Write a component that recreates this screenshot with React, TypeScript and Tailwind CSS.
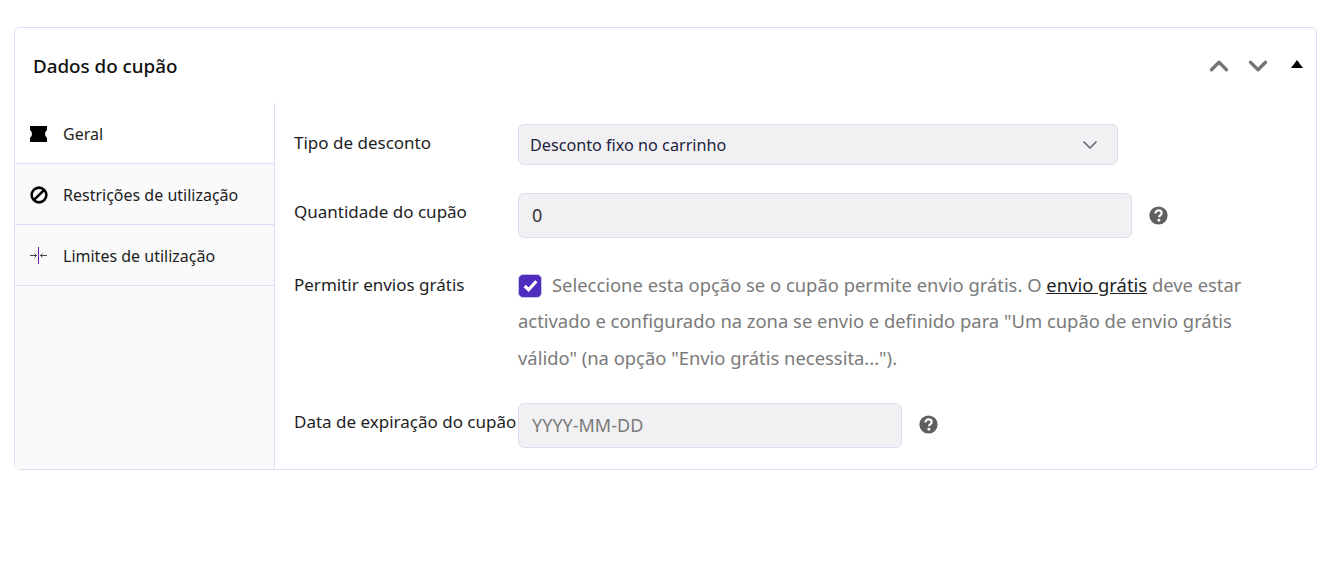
import { ChevronDown, ChevronUp } from 'lucide-react';

function HelpIcon() {
  return (
    <svg viewBox="0 0 20 20" className="w-[19px] h-[19px]">
      <circle cx="10" cy="10" r="9.6" fill="#5f5f5f" />
      <path d="M6.8 7.9c0-2 1.4-3.2 3.3-3.2 1.9 0 3.2 1.1 3.2 2.7 0 1.2-.6 1.8-1.5 2.4-.9.6-1.2 1-1.2 2" fill="none" stroke="#fff" strokeWidth="2.3" />
      <circle cx="10.4" cy="15" r="1.5" fill="#fff" />
    </svg>
  );
}

function Tab({ icon, label, active }: { icon: React.ReactNode; label: string; active?: boolean }) {
  return (
    <div className={`h-[61px] flex items-center border-b border-[#e0dcf6] pt-[1px] ${active ? 'bg-white' : 'bg-[#fafafa]'}`}>
      <div className="w-[48px] flex justify-center pr-[1px]">{icon}</div>
      <span className="text-[16px] text-[#1e1e1e]">{label}</span>
    </div>
  );
}

export default function App() {
  return (
    <div className="w-[1341px] h-[561px] bg-white pt-[27px] px-[14px] font-['Noto_Sans','Open_Sans',sans-serif]">
      <div className="w-[1303px] h-[443px] border border-[#e0dcf6] rounded-[6px] flex flex-col">
        <div className="h-[75px] flex items-center justify-between pl-[18px] pr-[4px] shrink-0">
          <span className="text-[18.8px] font-medium text-[#111] pt-[2px]">Dados do cupão</span>
          <div className="flex items-center gap-[9px]">
            <ChevronUp className="w-[30px] h-[30px] text-[#757575]" strokeWidth={2.6} />
            <ChevronDown className="w-[30px] h-[30px] text-[#757575]" strokeWidth={2.6} />
            <span className="w-[30px] flex justify-center pb-[4px]">
              <span className="w-0 h-0 border-x-[6px] border-x-transparent border-b-[8px] border-b-black" />
            </span>
          </div>
        </div>
        <div className="flex flex-1 min-h-0">
          <div className="w-[260px] shrink-0 border-r border-[#e0dcf6] bg-[#fafafa]">
            <Tab
              active
              label="Geral"
              icon={
                <svg viewBox="0 0 17 16" className="w-[17px] h-[16px]">
                  <path d="M0 0h17v4a5 5 0 0 0 0 8v4H0v-4a5 5 0 0 0 0-8z" fill="#000" />
                </svg>
              }
            />
            <Tab
              label="Restrições de utilização"
              icon={
                <svg viewBox="0 0 20 20" className="w-[18px] h-[18px]">
                  <circle cx="10" cy="10" r="8.2" fill="none" stroke="#000" strokeWidth="2.8" />
                  <path d="M4.5 15.5 15.5 4.5" stroke="#000" strokeWidth="2.8" />
                </svg>
              }
            />
            <Tab
              label="Limites de utilização"
              icon={
                <svg viewBox="0 0 17 17" className="w-[17px] h-[17px] mb-[1px]">
                  <path d="M8.5 0v17" stroke="#7b1fa2" strokeWidth="1" />
                  <path d="M0 8.5h6.5M4.5 6.5l2 2-2 2M17 8.5h-6.5M12.5 6.5l-2 2 2 2" stroke="#444" strokeWidth="1" fill="none" />
                </svg>
              }
            />
          </div>
          <div className="flex-1 pl-[18px] pt-[21px]">
            <div className="flex h-[41px]">
              <span className="w-[225px] shrink-0 text-[17px] text-[#1e1e1e] leading-[38px] pl-[1px]">Tipo de desconto</span>
              <div className="w-[600px] h-[41px] rounded-[6px] border border-[#e0dcf0] bg-[#f1f1f4] flex items-center justify-between pl-[11px] pr-[15px] text-[16.2px] text-[#1e1e3c]">
                <span className="pt-[1px]">Desconto fixo no carrinho</span>
                <ChevronDown className="w-[24px] h-[24px] text-[#6b6b7c]" strokeWidth={1.7} />
              </div>
            </div>
            <div className="flex mt-[28px] h-[45px]">
              <span className="w-[225px] shrink-0 text-[17px] text-[#1e1e1e] leading-[38px] pl-[1px]">Quantidade do cupão</span>
              <div className="w-[614px] h-[45px] rounded-[6px] border border-[#e0dcf0] bg-[#f1f1f4] flex items-center pl-[13px] text-[18px] text-[#333]">0</div>
              <div className="ml-[17px] flex items-center pb-[1px]"><HelpIcon /></div>
            </div>
            <div className="flex mt-[29px]">
              <span className="w-[225px] shrink-0 text-[17px] text-[#1e1e1e] leading-[36px] pl-[1px]">Permitir envios grátis</span>
              <p className="w-[770px] text-[18.4px] leading-[36.3px] text-[#7a7a7a]">
                <span className="inline-flex align-[-2px] w-[24px] h-[24px] rounded-[5px] bg-[#4f2bbf] border border-[#c9c3e8] items-center justify-center mr-[10px]">
                  <svg viewBox="0 0 16 16" className="w-[17px] h-[17px]">
                    <path d="M2.5 8.5 6.2 12 13.5 4" fill="none" stroke="#fff" strokeWidth="3" />
                  </svg>
                </span>
                Seleccione esta opção se o cupão permite envio grátis. O{' '}
                <span className="underline text-[#1e1e1e]">envio grátis</span> deve estar activado e configurado na zona se envio e definido para "Um cupão de envio grátis válido" (na opção "Envio grátis necessita...").
              </p>
            </div>
            <div className="flex mt-[27px] h-[45px]">
              <span className="w-[225px] shrink-0 text-[17px] text-[#1e1e1e] leading-[38px] whitespace-nowrap pl-[1px]">Data de expiração do cupão</span>
              <div className="w-[384px] h-[45px] rounded-[6px] border border-[#e0dcf0] bg-[#f1f1f4] flex items-center pl-[13px] pt-[1px] text-[18px] text-[#7a7a7a]">YYYY-MM-DD</div>
              <div className="ml-[17px] flex items-center pb-[1px]"><HelpIcon /></div>
            </div>
          </div>
        </div>
      </div>
    </div>
  );
}
